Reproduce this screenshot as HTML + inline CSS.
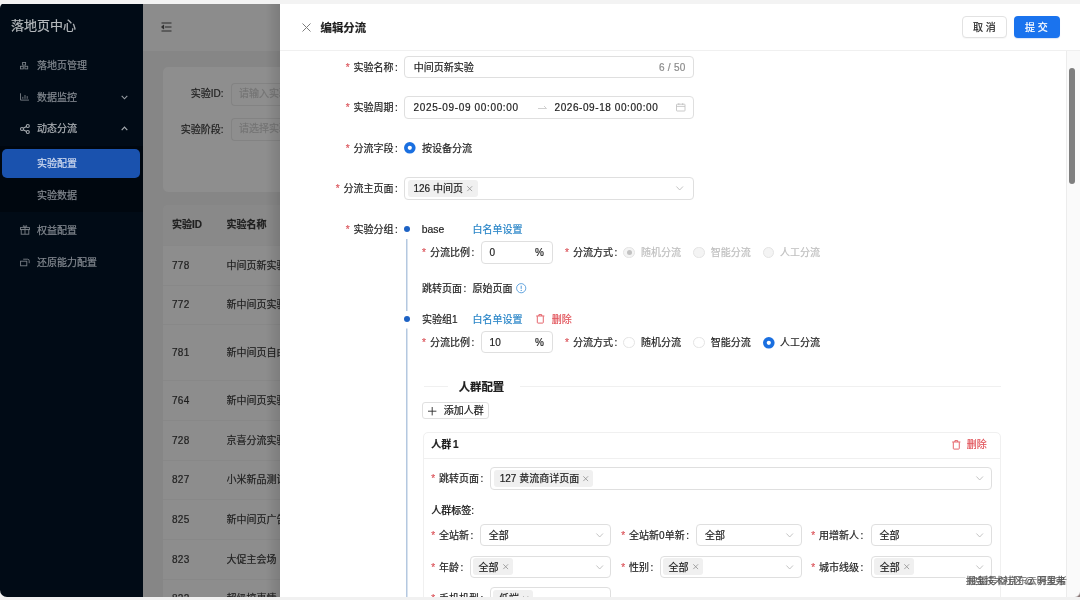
<!DOCTYPE html>
<html lang="zh-CN">
<head>
<meta charset="utf-8">
<title>落地页中心 - 编辑分流</title>
<style>
*{box-sizing:border-box;margin:0;padding:0}
html,body{width:1080px;height:600px;overflow:hidden;background:#f3f3f3}
body{font-family:"Liberation Sans","Noto Sans CJK SC",sans-serif;font-size:10px;color:#1f1f1f;position:relative;-webkit-text-stroke:0.2px}
.a{position:absolute;white-space:nowrap}
.t{position:absolute;white-space:nowrap;height:20px;line-height:20px}
svg{overflow:visible}
.s{color:#848a91}
.req{color:#dc5a60;font-family:"Liberation Sans",sans-serif;font-size:10px}
.inp{position:absolute;border:1px solid #dfdfdf;border-radius:4px;background:#fff}
.tag{position:absolute;background:#f0f0f0;border-radius:3px}
.blue{color:#2a86c8}
.red{color:#e2555c}
.dis{color:#bfbfbf}
.b{font-weight:700}
.m{font-weight:500}
.g{color:#8c8c8c}
.num{letter-spacing:0.65px}
.mt{color:#1f1f1f}
</style>
</head>
<body>
<div id="root" style="position:absolute;left:0;top:0;width:1080px;height:600px;will-change:transform">

<div class="a" style="left:0px;top:3px;width:143px;height:594px;background:#010b16;border-radius:5px 0 0 7px"></div>
<div class="a" style="left:143px;top:3px;width:137px;height:594px;background:#868686"></div>
<div class="a" style="left:143px;top:3px;width:137px;height:47.5px;background:#8c8c8c"></div>
<div class="a" style="left:162.5px;top:67px;width:118px;height:125px;background:#8e8e8e;border-radius:5px 0 0 5px"></div>
<div class="a" style="left:162.5px;top:205px;width:118px;height:400px;background:#8d8d8d;border-radius:5px 0 0 0"></div>
<div class="a" style="left:162.5px;top:205px;width:118px;height:40px;background:#898989;border-radius:5px 0 0 0"></div>
<div class="t " style="left:11px;top:16.3px;font-size:13px;color:#b4b8bc">落地页中心</div>
<div class="t s" style="left:37px;top:56px;">落地页管理</div>
<div class="t s" style="left:37px;top:87.8px;">数据监控</div>
<div class="t " style="left:37px;top:119.3px;color:#aeb2b7">动态分流</div>
<div class="a" style="left:0px;top:146px;width:143px;height:66px;background:#00070f"></div>
<div class="a" style="left:2px;top:149px;width:138px;height:28.5px;background:#1a52ae;border-radius:5px"></div>
<div class="t " style="left:37px;top:154.1px;color:#d2dcf0">实验配置</div>
<div class="t s" style="left:37px;top:185.8px;">实验数据</div>
<div class="t s" style="left:37px;top:220.8px;">权益配置</div>
<div class="t s" style="left:37px;top:252.8px;">还原能力配置</div>
<svg class="a" style="left:19.8px;top:61.6px;" width="8.2" height="7.4" viewBox="0 0 8.2 7.4"><g fill="none" stroke="#7a8087" stroke-width="0.9"><rect x="2.6" y="0.5" width="3" height="2.6"/><rect x="0.5" y="4.3" width="2.8" height="2.6"/><rect x="4.9" y="4.3" width="2.8" height="2.6"/></g></svg>
<svg class="a" style="left:19.5px;top:93.3px;" width="9" height="7.6" viewBox="0 0 9 7.6"><g fill="none" stroke="#7a8087" stroke-width="0.9"><path d="M0.5 0.3V7.1H9"/><path d="M2.8 5.8V3.8M5 5.8V2M7.2 5.8V3.1"/></g></svg>
<svg class="a" style="left:19.5px;top:123.5px;" width="10" height="10" viewBox="0 0 10 10"><g fill="none" stroke="#a4a9ae" stroke-width="1.1"><circle cx="2" cy="5" r="1.5"/><circle cx="7.8" cy="2" r="1.5"/><circle cx="7.8" cy="8" r="1.5"/><path d="M3.3 4.3L6.5 2.6M3.3 5.7L6.5 7.4"/></g></svg>
<svg class="a" style="left:19.5px;top:225px;" width="10" height="10" viewBox="0 0 10 10"><g fill="none" stroke="#7a8087" stroke-width="0.9"><rect x="1.2" y="4.6" width="7.6" height="4.6"/><rect x="0.5" y="2.6" width="9" height="2"/><path d="M5 2.6V9.2M5 2.6C3.5 2.6 2.6 0.6 3.8 0.6C4.6 0.6 5 1.8 5 2.6C5 1.8 5.4 0.6 6.2 0.6C7.4 0.6 6.5 2.6 5 2.6"/></g></svg>
<svg class="a" style="left:19.5px;top:257px;" width="10" height="10" viewBox="0 0 10 10"><g fill="none" stroke="#7a8087" stroke-width="0.9"><rect x="0.6" y="4.2" width="6.2" height="4.6"/><path d="M3.2 2.2H7.6A1.6 1.6 0 0 1 9.2 3.8V6.2"/></g></svg>
<svg class="a" style="left:121px;top:94.5px;" width="7" height="5" viewBox="0 0 7 5"><path d="M0.7 0.8L3.5 3.8L6.3 0.8" fill="none" stroke="#989da3" stroke-width="1.1"/></svg>
<svg class="a" style="left:121px;top:126px;" width="7" height="5" viewBox="0 0 7 5"><path d="M0.7 4.2L3.5 1.2L6.3 4.2" fill="none" stroke="#a4a9ae" stroke-width="1.2"/></svg>
<svg class="a" style="left:161px;top:21.5px;" width="11" height="10" viewBox="0 0 11 10"><g fill="none" stroke="#2b2b2b" stroke-width="1"><path d="M0.5 1H10.5M4 5H10.5M0.5 9H10.5"/><path d="M2.6 3.2L0.6 5L2.6 6.8Z" fill="#2b2b2b"/></g></svg>
<div class="t mt" style="right:856.5px;top:84.3px;">实验ID:</div>
<div class="t mt" style="right:856.5px;top:119.8px;">实验阶段:</div>
<div class="a" style="left:230.5px;top:83px;width:49.5px;height:22.5px;border:1px solid #838383;border-radius:4px 0 0 4px;border-right:0"></div>
<div class="a" style="left:230.5px;top:118px;width:49.5px;height:22.5px;border:1px solid #838383;border-radius:4px 0 0 4px;border-right:0"></div>
<div class="a" style="left:239px;top:84.3px;width:41px;height:20px;line-height:20px;overflow:hidden;color:#747474">请输入实验ID</div>
<div class="a" style="left:239px;top:119.3px;width:41px;height:20px;line-height:20px;overflow:hidden;color:#747474">请选择实验阶段</div>
<div class="t b mt" style="left:172px;top:215.3px;">实验ID</div>
<div class="a b mt" style="left:226.5px;top:215.3px;width:54px;height:20px;line-height:20px;overflow:hidden">实验名称</div>
<div class="t mt" style="left:172px;top:255.8px;letter-spacing:0.3px">778</div>
<div class="a mt" style="left:226.5px;top:255.8px;width:53.5px;height:20px;line-height:20px;overflow:hidden">中间页新实验</div>
<div class="t mt" style="left:172px;top:294.8px;letter-spacing:0.3px">772</div>
<div class="a mt" style="left:226.5px;top:294.8px;width:53.5px;height:20px;line-height:20px;overflow:hidden">新中间页实验二</div>
<div class="t mt" style="left:172px;top:342.8px;letter-spacing:0.3px">781</div>
<div class="a mt" style="left:226.5px;top:342.8px;width:53.5px;height:20px;line-height:20px;overflow:hidden">新中间页自由组合</div>
<div class="t mt" style="left:172px;top:390.8px;letter-spacing:0.3px">764</div>
<div class="a mt" style="left:226.5px;top:390.8px;width:53.5px;height:20px;line-height:20px;overflow:hidden">新中间页实验</div>
<div class="t mt" style="left:172px;top:430.8px;letter-spacing:0.3px">728</div>
<div class="a mt" style="left:226.5px;top:430.8px;width:53.5px;height:20px;line-height:20px;overflow:hidden">京喜分流实验</div>
<div class="t mt" style="left:172px;top:469.8px;letter-spacing:0.3px">827</div>
<div class="a mt" style="left:226.5px;top:469.8px;width:53.5px;height:20px;line-height:20px;overflow:hidden">小米新品测试</div>
<div class="t mt" style="left:172px;top:509.8px;letter-spacing:0.3px">825</div>
<div class="a mt" style="left:226.5px;top:509.8px;width:53.5px;height:20px;line-height:20px;overflow:hidden">新中间页广告</div>
<div class="t mt" style="left:172px;top:549.8px;letter-spacing:0.3px">823</div>
<div class="a mt" style="left:226.5px;top:549.8px;width:53.5px;height:20px;line-height:20px;overflow:hidden">大促主会场</div>
<div class="t mt" style="left:172px;top:589.3px;letter-spacing:0.3px">822</div>
<div class="a mt" style="left:226.5px;top:589.3px;width:53.5px;height:20px;line-height:20px;overflow:hidden">超级搞事情</div>
<div class="a" style="left:162.5px;top:245px;width:117.5px;height:1px;background:#888888"></div>
<div class="a" style="left:162.5px;top:284.5px;width:117.5px;height:1px;background:#888888"></div>
<div class="a" style="left:162.5px;top:323.5px;width:117.5px;height:1px;background:#888888"></div>
<div class="a" style="left:162.5px;top:380px;width:117.5px;height:1px;background:#888888"></div>
<div class="a" style="left:162.5px;top:420px;width:117.5px;height:1px;background:#888888"></div>
<div class="a" style="left:162.5px;top:459.5px;width:117.5px;height:1px;background:#888888"></div>
<div class="a" style="left:162.5px;top:499px;width:117.5px;height:1px;background:#888888"></div>
<div class="a" style="left:162.5px;top:539px;width:117.5px;height:1px;background:#888888"></div>
<div class="a" style="left:162.5px;top:578.5px;width:117.5px;height:1px;background:#888888"></div>
<div class="a" style="left:266px;top:3px;width:14px;height:594px;background:linear-gradient(90deg,rgba(0,0,0,0),rgba(0,0,0,0.11))"></div>
<div class="a" style="left:280px;top:3px;width:800px;height:594px;background:#fff"></div>
<div class="a" style="left:280px;top:50px;width:800px;height:1px;background:#f0f0f0"></div>
<svg class="a" style="left:301.5px;top:22.5px;" width="9" height="9" viewBox="0 0 9 9"><path d="M0.5 0.5L8.5 8.5M8.5 0.5L0.5 8.5" fill="none" stroke="#7d7d7d" stroke-width="1"/></svg>
<div class="t b" style="left:320.5px;top:18px;font-size:11.4px">编辑分流</div>
<div class="a" style="left:961.5px;top:15.5px;width:45.5px;height:22.5px;border:1px solid #e2e2e2;border-radius:4px;background:#fff;box-shadow:0 1px 1px rgba(0,0,0,0.03)"></div>
<div class="t " style="left:973px;top:17.8px;">取 消</div>
<div class="a" style="left:1013.5px;top:15.5px;width:46px;height:22.5px;border-radius:4px;background:#1a73ee;box-shadow:0 1px 1px rgba(5,80,200,0.15)"></div>
<div class="t " style="left:1025px;top:17.8px;color:#fff">提 交</div>
<div class="a" style="left:1066px;top:51px;width:14px;height:546px;background:#fafafa;border-left:1px solid #ececec"></div>
<div class="a" style="left:1068.8px;top:68px;width:6px;height:115.5px;background:#7f7f7f;border-radius:3px"></div>
<div class="t " style="right:682.2px;top:57.8px;"><span class="req">*</span><span style="margin-left:4px">实验名称</span><span style="margin-left:1.5px">:</span></div>
<div class="inp" style="left:404.3px;top:55.7px;width:289.5px;height:22.5px;"></div>
<div class="t " style="left:413.7px;top:57.8px;">中间页新实验</div>
<div class="t g" style="right:394.3px;top:57.8px;letter-spacing:0.3px">6 / 50</div>
<div class="t " style="right:682.2px;top:98.3px;"><span class="req">*</span><span style="margin-left:4px">实验周期</span><span style="margin-left:1.5px">:</span></div>
<div class="inp" style="left:404.3px;top:96.3px;width:289.5px;height:22.5px;"></div>
<div class="t num" style="left:413.5px;top:98.3px;">2025-09-09 00:00:00</div>
<div class="t num" style="left:554.5px;top:98.3px;letter-spacing:0.58px">2026-09-18 00:00:00</div>
<svg class="a" style="left:538px;top:105px;" width="9" height="5" viewBox="0 0 9 5"><path d="M0 3.5H8.5L6 1" fill="none" stroke="#c4c4c4" stroke-width="0.8"/></svg>
<svg class="a" style="left:675.5px;top:103.2px;" width="9.5" height="8.5" viewBox="0 0 9.5 8.5"><g fill="none" stroke="#bdbdbd" stroke-width="0.8"><rect x="0.5" y="1.2" width="8.5" height="6.8" rx="0.6"/><path d="M0.5 3.4H9M2.8 0.2V2M6.7 0.2V2"/></g></svg>
<div class="t " style="right:682.2px;top:139px;"><span class="req">*</span><span style="margin-left:4px">分流字段</span><span style="margin-left:1.5px">:</span></div>
<svg class="a" style="left:404.3px;top:142.3px;" width="11.6" height="11.6" viewBox="0 0 11.6 11.6"><circle cx="5.8" cy="5.8" r="5.8" fill="#1a6fe0"/><circle cx="5.8" cy="5.8" r="2.1" fill="#fff"/></svg>
<div class="t " style="left:422px;top:139px;">按设备分流</div>
<div class="t " style="right:682.2px;top:179.1px;"><span class="req">*</span><span style="margin-left:4px">分流主页面</span><span style="margin-left:1.5px">:</span></div>
<div class="inp" style="left:404.3px;top:177.3px;width:289.5px;height:22.5px;"></div>
<div class="tag" style="left:407.5px;top:180px;width:70px;height:17px;"></div>
<div class="t " style="left:413.5px;top:179.3px;">126 中间页</div>
<svg class="a" style="left:467.3px;top:185.9px;" width="5.4" height="5.4" viewBox="0 0 5.4 5.4"><path d="M0.3 0.3L5.1 5.1M5.1 0.3L0.3 5.1" fill="none" stroke="#8f8f8f" stroke-width="0.8"/></svg>
<svg class="a" style="left:675.5px;top:186.3px;" width="7.4" height="4.6" viewBox="0 0 7.4 4.6"><path d="M0.4 0.5L3.7 4L7 0.5" fill="none" stroke="#bdbdbd" stroke-width="0.9"/></svg>
<div class="t " style="right:682.2px;top:220px;"><span class="req">*</span><span style="margin-left:4px">实验分组</span><span style="margin-left:1.5px">:</span></div>
<svg class="a" style="left:406px;top:238.5px;" width="1.5" height="360" viewBox="0 0 1.5 360"><rect x="0" y="0" width="1.5" height="72" fill="#b4c8e0"/><rect x="0" y="89.5" width="1.5" height="270" fill="#b4c8e0"/></svg>
<div class="a" style="left:404px;top:226px;width:6.2px;height:6.2px;border-radius:50%;background:#1d62c4"></div>
<div class="a" style="left:404px;top:315.7px;width:6.2px;height:6.2px;border-radius:50%;background:#1d62c4"></div>
<div class="t " style="left:421.8px;top:219.8px;font-size:10.4px">base</div>
<div class="t blue" style="left:472.5px;top:219.8px;">白名单设置</div>
<div class="t " style="left:422px;top:243.3px;"><span class="req">*</span><span style="margin-left:4px">分流比例</span><span style="margin-left:1.5px">:</span></div>
<div class="inp" style="left:480.5px;top:241.3px;width:72px;height:22.3px;"></div>
<div class="t " style="left:489.5px;top:243.3px;letter-spacing:0.3px">0</div>
<div class="t " style="left:535px;top:243.3px;">%</div>
<div class="t " style="left:565px;top:243.3px;"><span class="req">*</span><span style="margin-left:4px">分流方式</span><span style="margin-left:1.5px">:</span></div>
<div class="a" style="left:623.3px;top:246.7px;width:11.6px;height:11.6px;border-radius:50%;background:#f4f4f4;border:1px solid #e4e4e4"></div>
<div class="a" style="left:626.6px;top:250px;width:5px;height:5px;border-radius:50%;background:#c2c2c2"></div>
<div class="t dis" style="left:641px;top:243.3px;">随机分流</div>
<div class="a" style="left:693.2px;top:246.7px;width:11.6px;height:11.6px;border-radius:50%;background:#f4f4f4;border:1px solid #e4e4e4"></div>
<div class="t dis" style="left:710.7px;top:243.3px;">智能分流</div>
<div class="a" style="left:762.6px;top:246.7px;width:11.6px;height:11.6px;border-radius:50%;background:#f4f4f4;border:1px solid #e4e4e4"></div>
<div class="t dis" style="left:780px;top:243.3px;">人工分流</div>
<div class="t " style="left:422px;top:278.8px;">跳转页面<span style="margin-left:1.5px">:</span><span style="margin-left:6.3px">原始页面</span></div>
<svg class="a" style="left:515.8px;top:282.8px;" width="10.4" height="10.4" viewBox="0 0 10.4 10.4"><circle cx="5.2" cy="5.2" r="4.6" fill="none" stroke="#3f8fd6" stroke-width="0.8"/><path d="M5.2 2.7V5.9" stroke="#3f8fd6" stroke-width="0.9"/><circle cx="5.2" cy="7.4" r="0.55" fill="#3f8fd6"/></svg>
<div class="t " style="left:422px;top:309.5px;">实验组1</div>
<div class="t blue" style="left:472.5px;top:309.5px;">白名单设置</div>
<svg class="a" style="left:536.2px;top:313.9px;" width="8.6" height="9.6" viewBox="0 0 8.6 9.6"><g fill="none" stroke="#e2555c" stroke-width="0.9"><path d="M0.2 2H8.4M2.9 2V0.6H5.7V2M1.3 2.2V8.4A0.7 0.7 0 0 0 2 9.1H6.6A0.7 0.7 0 0 0 7.3 8.4V2.2"/></g></svg>
<div class="t red" style="left:551.7px;top:309.5px;">删除</div>
<div class="t " style="left:422px;top:333.1px;"><span class="req">*</span><span style="margin-left:4px">分流比例</span><span style="margin-left:1.5px">:</span></div>
<div class="inp" style="left:480.5px;top:331.1px;width:72px;height:22.3px;"></div>
<div class="t " style="left:489.5px;top:333.1px;letter-spacing:0.3px">10</div>
<div class="t " style="left:535px;top:333.1px;">%</div>
<div class="t " style="left:565px;top:333.1px;"><span class="req">*</span><span style="margin-left:4px">分流方式</span><span style="margin-left:1.5px">:</span></div>
<div class="a" style="left:623.3px;top:336.5px;width:11.6px;height:11.6px;border-radius:50%;background:#fff;border:1px solid #e4e4e4"></div>
<div class="t " style="left:641px;top:333.1px;">随机分流</div>
<div class="a" style="left:693.2px;top:336.5px;width:11.6px;height:11.6px;border-radius:50%;background:#fff;border:1px solid #e4e4e4"></div>
<div class="t " style="left:710.7px;top:333.1px;">智能分流</div>
<svg class="a" style="left:762.6px;top:336.5px;" width="11.6" height="11.6" viewBox="0 0 11.6 11.6"><circle cx="5.8" cy="5.8" r="5.8" fill="#1a6fe0"/><circle cx="5.8" cy="5.8" r="2.1" fill="#fff"/></svg>
<div class="t " style="left:780px;top:333.1px;">人工分流</div>
<div class="a" style="left:423.7px;top:386px;width:24px;height:1px;background:#f0f0f0"></div>
<div class="a" style="left:520px;top:386px;width:481px;height:1px;background:#f0f0f0"></div>
<div class="t b" style="left:458.7px;top:377px;font-size:11.4px">人群配置</div>
<div class="a" style="left:422px;top:402px;width:67.3px;height:17px;border:1px solid #e0e0e0;border-radius:3px;background:#fff"></div>
<svg class="a" style="left:428.3px;top:406.5px;" width="8.4" height="8.4" viewBox="0 0 8.4 8.4"><path d="M4.2 0V8.4M0 4.2H8.4" stroke="#2b2b2b" stroke-width="0.9"/></svg>
<div class="t " style="left:443.7px;top:401.2px;">添加人群</div>
<div class="a" style="left:423px;top:431.5px;width:578px;height:180px;border:1px solid #f0f0f0;border-radius:5px;background:#fff"></div>
<div class="a" style="left:423px;top:457.5px;width:578px;height:1px;background:#f0f0f0"></div>
<div class="t b" style="left:431.2px;top:435.4px;word-spacing:-1px">人群 1</div>
<svg class="a" style="left:951.5px;top:439.7px;" width="8.6" height="9.6" viewBox="0 0 8.6 9.6"><g fill="none" stroke="#e2555c" stroke-width="0.9"><path d="M0.2 2H8.4M2.9 2V0.6H5.7V2M1.3 2.2V8.4A0.7 0.7 0 0 0 2 9.1H6.6A0.7 0.7 0 0 0 7.3 8.4V2.2"/></g></svg>
<div class="t red" style="left:966.7px;top:435.3px;">删除</div>
<div class="t " style="left:431.2px;top:469.1px;"><span class="req">*</span><span style="margin-left:4px">跳转页面</span><span style="margin-left:1.5px">:</span></div>
<div class="inp" style="left:490px;top:467px;width:501.7px;height:22.5px;"></div>
<div class="tag" style="left:493.7px;top:469.9px;width:99px;height:17px;"></div>
<div class="t " style="left:499.7px;top:469.2px;">127 黄流商详页面</div>
<svg class="a" style="left:582.5px;top:475.8px;" width="5.4" height="5.4" viewBox="0 0 5.4 5.4"><path d="M0.3 0.3L5.1 5.1M5.1 0.3L0.3 5.1" fill="none" stroke="#8f8f8f" stroke-width="0.8"/></svg>
<svg class="a" style="left:976.3px;top:476.2px;" width="7.4" height="4.6" viewBox="0 0 7.4 4.6"><path d="M0.4 0.5L3.7 4L7 0.5" fill="none" stroke="#bdbdbd" stroke-width="0.9"/></svg>
<div class="t m" style="left:431.2px;top:500.8px;">人群标签:</div>
<div class="t " style="left:431.2px;top:525.5px;"><span class="req">*</span><span style="margin-left:4px">全站新</span><span style="margin-left:1.5px">:</span></div>
<div class="inp" style="left:480px;top:523.7px;width:131.3px;height:22.3px;"></div>
<div class="t " style="left:488.7px;top:525.5px;">全部</div>
<svg class="a" style="left:595.7px;top:532.5px;" width="7.4" height="4.6" viewBox="0 0 7.4 4.6"><path d="M0.4 0.5L3.7 4L7 0.5" fill="none" stroke="#bdbdbd" stroke-width="0.9"/></svg>
<div class="t " style="left:621.2px;top:525.5px;"><span class="req">*</span><span style="margin-left:4px">全站新0单新</span><span style="margin-left:1.5px">:</span></div>
<div class="inp" style="left:696.3px;top:523.7px;width:105.4px;height:22.3px;"></div>
<div class="t " style="left:705.0px;top:525.5px;">全部</div>
<svg class="a" style="left:786.1px;top:532.5px;" width="7.4" height="4.6" viewBox="0 0 7.4 4.6"><path d="M0.4 0.5L3.7 4L7 0.5" fill="none" stroke="#bdbdbd" stroke-width="0.9"/></svg>
<div class="t " style="left:811.2px;top:525.5px;"><span class="req">*</span><span style="margin-left:4px">用增新人</span><span style="margin-left:1.5px">:</span></div>
<div class="inp" style="left:870.7px;top:523.7px;width:121px;height:22.3px;"></div>
<div class="t " style="left:879.4000000000001px;top:525.5px;">全部</div>
<svg class="a" style="left:976.1px;top:532.5px;" width="7.4" height="4.6" viewBox="0 0 7.4 4.6"><path d="M0.4 0.5L3.7 4L7 0.5" fill="none" stroke="#bdbdbd" stroke-width="0.9"/></svg>
<div class="t " style="left:431.2px;top:557.5px;"><span class="req">*</span><span style="margin-left:4px">年龄</span><span style="margin-left:1.5px">:</span></div>
<div class="inp" style="left:469.5px;top:555.7px;width:141.8px;height:22.3px;"></div>
<div class="tag" style="left:472.5px;top:558.2px;width:40.3px;height:17px;"></div>
<div class="t " style="left:478.5px;top:557.5px;">全部</div>
<svg class="a" style="left:502.6px;top:564.1px;" width="5.4" height="5.4" viewBox="0 0 5.4 5.4"><path d="M0.3 0.3L5.1 5.1M5.1 0.3L0.3 5.1" fill="none" stroke="#8f8f8f" stroke-width="0.8"/></svg>
<svg class="a" style="left:595.7px;top:564.5px;" width="7.4" height="4.6" viewBox="0 0 7.4 4.6"><path d="M0.4 0.5L3.7 4L7 0.5" fill="none" stroke="#bdbdbd" stroke-width="0.9"/></svg>
<div class="t " style="left:621.2px;top:557.5px;"><span class="req">*</span><span style="margin-left:4px">性别</span><span style="margin-left:1.5px">:</span></div>
<div class="inp" style="left:659.5px;top:555.7px;width:142.2px;height:22.3px;"></div>
<div class="tag" style="left:662.5px;top:558.2px;width:40.3px;height:17px;"></div>
<div class="t " style="left:668.5px;top:557.5px;">全部</div>
<svg class="a" style="left:692.6px;top:564.1px;" width="5.4" height="5.4" viewBox="0 0 5.4 5.4"><path d="M0.3 0.3L5.1 5.1M5.1 0.3L0.3 5.1" fill="none" stroke="#8f8f8f" stroke-width="0.8"/></svg>
<svg class="a" style="left:786.1px;top:564.5px;" width="7.4" height="4.6" viewBox="0 0 7.4 4.6"><path d="M0.4 0.5L3.7 4L7 0.5" fill="none" stroke="#bdbdbd" stroke-width="0.9"/></svg>
<div class="t " style="left:811.2px;top:557.5px;"><span class="req">*</span><span style="margin-left:4px">城市线级</span><span style="margin-left:1.5px">:</span></div>
<div class="inp" style="left:870.7px;top:555.7px;width:121px;height:22.3px;"></div>
<div class="tag" style="left:873.7px;top:558.2px;width:40.3px;height:17px;"></div>
<div class="t " style="left:879.7px;top:557.5px;">全部</div>
<svg class="a" style="left:903.8px;top:564.1px;" width="5.4" height="5.4" viewBox="0 0 5.4 5.4"><path d="M0.3 0.3L5.1 5.1M5.1 0.3L0.3 5.1" fill="none" stroke="#8f8f8f" stroke-width="0.8"/></svg>
<svg class="a" style="left:976.1px;top:564.5px;" width="7.4" height="4.6" viewBox="0 0 7.4 4.6"><path d="M0.4 0.5L3.7 4L7 0.5" fill="none" stroke="#bdbdbd" stroke-width="0.9"/></svg>
<div class="t " style="left:431.2px;top:588.5px;"><span class="req">*</span><span style="margin-left:4px">手机机型</span><span style="margin-left:1.5px">:</span></div>
<div class="inp" style="left:490px;top:587px;width:121.3px;height:22.3px;"></div>
<div class="tag" style="left:493px;top:589.7px;width:40.3px;height:17px;"></div>
<div class="t " style="left:499px;top:589px;">低端</div>
<svg class="a" style="left:523.1px;top:595.6px;" width="5.4" height="5.4" viewBox="0 0 5.4 5.4"><path d="M0.3 0.3L5.1 5.1M5.1 0.3L0.3 5.1" fill="none" stroke="#8f8f8f" stroke-width="0.8"/></svg>
<div class="t " style="left:966px;top:571.1px;font-size:9.6px;color:#5f5f5f;text-shadow:0 0 1px #fff,1px 1px 0 #fff,-1px -1px 0 #fff;letter-spacing:-0.2px">掘金技术社区 @ 明里弗</div>
<div class="t " style="left:968px;top:571.4px;font-size:9.6px;color:rgba(80,80,80,0.75);letter-spacing:0.3px">搜狐号@京东云开发者</div>
<div class="a" style="left:0px;top:0px;width:1080px;height:3.5px;background:#f3f3f3"></div>
<div class="a" style="left:0px;top:597px;width:1080px;height:3px;background:#f1f1f1"></div>
<div class="a" style="left:1074px;top:591px;width:6px;height:6px;background:radial-gradient(circle at 0 0,rgba(0,0,0,0) 5.5px,#8a7a7a 7px)"></div>
</div>
</body>
</html>
